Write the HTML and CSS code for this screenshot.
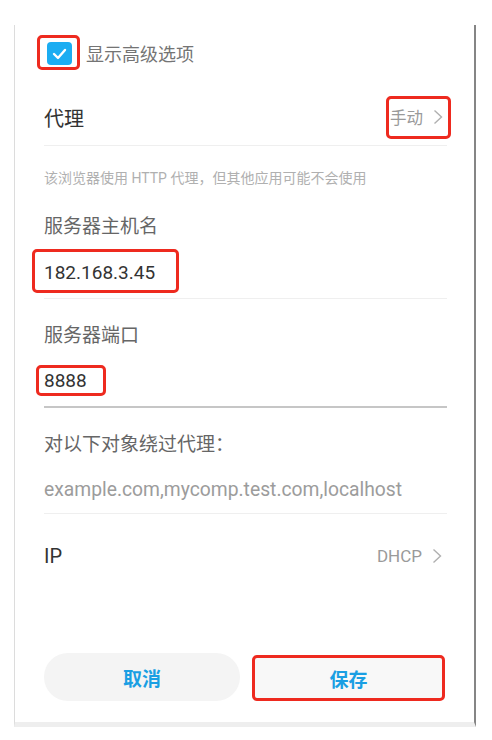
FILE: index.html
```html
<!DOCTYPE html>
<html lang="zh-CN">
<head>
<meta charset="utf-8">
<title>代理设置</title>
<link rel="stylesheet" href="styles.css">
</head>
<body>
<div class="panel">
  <div class="adv">
    <span class="mark mark-check"><span class="checkbox"><svg viewBox="0 0 25 23" width="25" height="23"><polyline points="7,12 11,16 18,8" fill="none" stroke="#fff" stroke-width="2.4" stroke-linecap="round" stroke-linejoin="round"/></svg></span></span>
    <span class="adv-label">显示高级选项</span>
  </div>

  <div class="proxy">
    <span class="title">代理</span>
    <span class="mark mark-value"><span class="value">手动</span><svg class="chev" viewBox="0 0 10 16" width="10" height="16"><polyline points="1.5,1.5 8.5,8 1.5,14.5" fill="none" stroke="#b0b0b0" stroke-width="1.4"/></svg></span>
  </div>

  <div class="hint">该浏览器使用 HTTP 代理，但其他应用可能不会使用</div>

  <div class="label">服务器主机名</div>
  <div class="field host">
    <span class="mark mark-host">182.168.3.45</span>
  </div>

  <div class="label">服务器端口</div>
  <div class="field port">
    <span class="mark mark-port">8888</span>
  </div>

  <div class="label">对以下对象绕过代理：</div>
  <div class="bypass">example.com,mycomp.test.com,localhost</div>

  <div class="ip">
    <span class="title">IP</span>
    <span class="ip-value"><span class="value">DHCP</span><svg class="chev" viewBox="0 0 10 16" width="10" height="16"><polyline points="1.5,1.5 8.5,8 1.5,14.5" fill="none" stroke="#b0b0b0" stroke-width="1.4"/></svg></span>
  </div>

  <div class="actions">
    <button class="btn btn-cancel">取消</button>
    <button class="btn btn-save">保存</button>
  </div>
</div>
</body>
</html>
```
FILE: styles.css
```css
html, body {
  margin: 0;
  padding: 0;
  background: #ffffff;
}

body {
  font-family: Roboto, "Noto Sans CJK SC", sans-serif;
  color: #333;
}

.panel {
  box-sizing: border-box;
  margin: 25px 0 0 14px;
  width: 462px;
  height: 702px;
  border-left: 1px solid #dcdcdc;
  border-right: 2px solid #858585;
  border-bottom: 5px solid #eeeeee;
  padding: 0 27px 21px 29px;
  display: flex;
  flex-direction: column;
}

.mark {
  border: 3px solid #ee2a1f;
  border-radius: 5px;
  box-sizing: border-box;
}

/* advanced options */
.adv {
  display: flex;
  align-items: center;
  padding-top: 10px;
  height: 35px;
}

.mark-check {
  display: inline-flex;
  align-items: center;
  height: 35px;
  width: 43px;
  padding: 2px 0 0 7px;
  margin-left: -7px;
}

.checkbox {
  display: block;
  width: 25px;
  height: 23px;
  background: #1badf2;
  border-radius: 4px;
}

.checkbox svg {
  display: block;
}

.adv-label {
  margin-left: 6px;
  font-size: 18px;
  color: #747474;
  font-family: "Noto Sans CJK SC", sans-serif;
}

/* proxy row */
.proxy {
  box-sizing: border-box;
  height: 76px;
  padding-top: 19px;
  display: flex;
  align-items: center;
  justify-content: space-between;
  border-bottom: 1px solid #efefef;
}

.title {
  font-size: 20px;
  color: #333;
  font-family: "Noto Sans CJK SC", sans-serif;
}

.ip .title {
  font-family: Roboto, sans-serif;
}

.value {
  color: #9a9a9a;
  font-size: 16.5px;
  font-family: "Noto Sans CJK SC", sans-serif;
}

.chev {
  display: block;
  margin-left: 10px;
}

.mark-value {
  display: inline-flex;
  align-items: center;
  height: 43px;
  width: 65px;
  padding-left: 1px;
  margin-right: -4px;
}

.hint {
  margin-top: 22px;
  line-height: 20px;
  font-size: 14px;
  color: #b0b0b0;
}

.label {
  margin-top: 24px;
  line-height: 26px;
  font-size: 19px;
  color: #666;
  font-family: "Noto Sans CJK SC", sans-serif;
}

.field {
  box-sizing: border-box;
  display: flex;
  align-items: flex-start;
}

.host {
  height: 61px;
  padding-top: 11px;
  border-bottom: 1px solid #efefef;
}

.mark-host {
  display: inline-block;
  height: 44px;
  line-height: 26px;
  padding: 8px 21px 4px 9px;
  margin-left: -12px;
  font-size: 19px;
  color: #333;
}

.field.host + .label {
  margin-top: 22px;
}

.port {
  height: 61px;
  padding-top: 18px;
  border-bottom: 2px solid #c6c6c6;
}

.mark-port {
  display: inline-block;
  height: 31px;
  line-height: 25px;
  padding: 0 16px 0 5px;
  margin-left: -8px;
  font-size: 19px;
  color: #333;
}

.field.port + .label {
  margin-top: 22px;
}

.bypass {
  padding: 21px 0 10px;
  line-height: 26px;
  font-size: 19.3px;
  color: #9c9c9c;
  border-bottom: 1px solid #efefef;
}

.ip {
  margin-top: 28px;
  line-height: 28px;
  display: flex;
  align-items: center;
  justify-content: space-between;
}

.ip-value {
  display: inline-flex;
  align-items: center;
  margin-right: 5px;
}

.ip-value .value {
  font-family: Roboto, sans-serif;
  font-size: 17px;
}

.actions {
  margin-top: auto;
  display: grid;
  grid-template-columns: 196px 193px;
  column-gap: 12px;
}

.btn {
  height: 48px;
  border: none;
  font-family: "Noto Sans CJK SC", sans-serif;
  font-size: 19px;
  font-weight: bold;
  color: #1a9fe3;
  background: #f4f4f4;
  border-radius: 24px;
  padding: 0;
}

.btn-save {
  background: #f8f8f8;
  border: 3px solid #ee2a1f;
  border-radius: 5px;
  height: 46px;
  margin-top: 2px;
}
```
